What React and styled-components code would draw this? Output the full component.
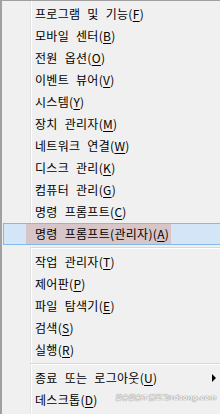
import React from "react";
import styled, { createGlobalStyle } from "styled-components";

const Global = createGlobalStyle`
  html, body { margin: 0; padding: 0; width: 220px; height: 414px; overflow: hidden; background: #f0f0f0; }
  #root { width: 220px; height: 414px; overflow: hidden; }
`;

const Menu = styled.div`
  position: relative;
  box-sizing: border-box;
  width: 232px;
  height: 414px;
  border-top: 1px solid #a0a0a0;
  border-left: 2px solid #a0a0a0;
  padding-top: 2px;
  display: flex;
  flex-direction: column;
  background: linear-gradient(
      to right,
      transparent 28px,
      #e2e3e3 28px,
      #e2e3e3 29px,
      #ffffff 29px,
      #ffffff 30px,
      transparent 30px
    ),
    #f0f0f0;
  font-family: "Noto Sans CJK KR", "Noto Sans", sans-serif;
  font-size: 12px;
  letter-spacing: 0.3px;
  word-spacing: 4px;
  color: #000;
`;

const Item = styled.div`
  position: relative;
  box-sizing: border-box;
  height: 22px;
  margin-left: 1px;
  padding-left: 31px;
  padding-right: 16px;
  display: flex;
  align-items: center;
  white-space: nowrap;
  border: 1px solid ${(p) => (p.$active ? "#84b8ea" : "transparent")};
  border-right: none;
  background: ${(p) => (p.$active ? "#d3e5f7" : "transparent")};
`;

const Mark = styled.div`
  position: absolute;
  left: 22px;
  top: 0;
  bottom: 0;
  width: 145px;
  background: #d8c5c8;
`;

const Label = styled.span`
  position: relative;
  line-height: 22px;
`;

const Key = styled.span`
  text-decoration: underline;
  text-underline-offset: 2px;
`;

const Arrow = styled.span`
  margin-left: auto;
  width: 0;
  height: 0;
  border-left: 4px solid #000;
  border-top: 4px solid transparent;
  border-bottom: 4px solid transparent;
`;

const Separator = styled.div`
  height: 1px;
  margin: 2px 0 2px 29px;
  background: #d7d7d7;
  border-bottom: 1px solid #fff;
`;

const Watermark = styled.div`
  position: absolute;
  left: 113px;
  top: 391px;
  font-family: "DejaVu Sans", "Noto Sans CJK KR", sans-serif;
  font-size: 7px;
  font-weight: bold;
  font-style: italic;
  letter-spacing: 0;
  word-spacing: 0;
  color: #f4f4f4;
  text-shadow: 0 0 1px #8a8a8a, 0 0 1px #8a8a8a;
  white-space: nowrap;
`;

const items = [
  ["프로그램 및 기능", "F"],
  ["모바일 센터", "B"],
  ["전원 옵션", "O"],
  ["이벤트 뷰어", "V"],
  ["시스템", "Y"],
  ["장치 관리자", "M"],
  ["네트워크 연결", "W"],
  ["디스크 관리", "K"],
  ["컴퓨터 관리", "G"],
  ["명령 프롬프트", "C"],
  ["명령 프롬프트(관리자)", "A", { active: true }],
  "sep",
  ["작업 관리자", "T"],
  ["제어판", "P"],
  ["파일 탐색기", "E"],
  ["검색", "S"],
  ["실행", "R"],
  "sep",
  ["종료 또는 로그아웃", "U", { sub: true }],
  ["데스크톱", "D"],
];

export default function App() {
  return (
    <>
      <Global />
      <Menu>
        {items.map((it, i) => {
          if (it === "sep") return <Separator key={i} />;
          const [text, key, opts = {}] = it;
          return (
            <Item key={i} $active={opts.active}>
              {opts.active && <Mark />}
              <Label>
                {text}(<Key>{key}</Key>)
              </Label>
              {opts.sub && <Arrow />}
            </Item>
          );
        })}
        <Watermark>알송알송IT블로그/rdsong.com</Watermark>
      </Menu>
    </>
  );
}
